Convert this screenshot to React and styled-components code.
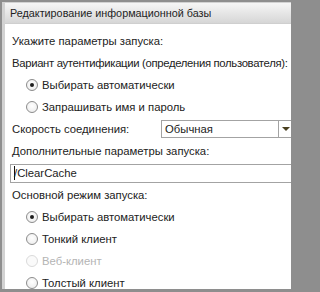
import React from "react";
import styled, { createGlobalStyle } from "styled-components";

const Global = createGlobalStyle`
  html, body { margin: 0; padding: 0; background: #8e8e8e; }
  body { font-family: "Liberation Sans", Arial, sans-serif; }
`;

const Window = styled.div`
  box-sizing: border-box;
  width: 294px;
  height: 292px;
  border-style: solid;
  border-color: #8e8e8e;
  border-width: 2px 3px 3px 2px;
  background: #d2d2d2;
  padding: 1px 0 0 3px;
  display: flex;
  flex-direction: column;
  overflow: hidden;
`;

const TitleBar = styled.div`
  height: 20px;
  flex: none;
  display: flex;
  align-items: center;
  padding-left: 5px;
  font-size: 10.8px;
  color: #1e1e1e;
  background: linear-gradient(#f6f6f6, #e6e6e6 50%, #d6d6d6);
  border-bottom: 1px solid #cfcfcf;
  white-space: nowrap;
`;

const Body = styled.div`
  flex: 1;
  background: #fff;
  padding: 6px 0 0 7px;
  display: flex;
  flex-direction: column;
  overflow: hidden;
`;

const Row = styled.div`
  height: 22px;
  flex: none;
  display: flex;
  align-items: center;
  font-size: 11.3px;
  letter-spacing: ${(p) => (p.$tight ? "-0.32px" : "normal")};
  color: ${(p) => (p.$disabled ? "#b4b4b4" : "#222")};
  white-space: nowrap;
  padding-left: ${(p) => (p.$indent ? "14px" : "0")};
`;

const Label = styled.span`
  width: 149px;
  flex: none;
`;

const Circle = styled.span`
  box-sizing: border-box;
  width: 12px;
  height: 12px;
  border-radius: 50%;
  border: 1px solid ${(p) => (p.$disabled ? "#dadada" : "#8c8c8c")};
  background: ${(p) =>
    p.$disabled ? "#fafafa" : "radial-gradient(circle at 50% 40%, #ffffff, #e9e9e9)"};
  display: inline-flex;
  align-items: center;
  justify-content: center;
  margin-right: 4px;
  flex: none;
  &::after {
    content: "";
    width: 4px;
    height: 4px;
    border-radius: 50%;
    background: #1e1e1e;
    display: ${(p) => (p.$checked ? "block" : "none")};
  }
`;

const Combo = styled.div`
  box-sizing: border-box;
  height: 18px;
  flex: 1;
  border: 1px solid #a3a3a3;
  border-right: none;
  display: flex;
  align-items: center;
`;

const ComboText = styled.span`
  flex: 1;
  padding-left: 3px;
  font-size: 11.3px;
  color: #222;
`;

const ComboButton = styled.span`
  width: 12px;
  align-self: stretch;
  border-left: 1px solid #a3a3a3;
  display: flex;
  align-items: center;
  justify-content: center;
`;

const Arrow = styled.span`
  width: 0;
  height: 0;
  border-left: 4px solid transparent;
  border-right: 4px solid transparent;
  border-top: 4px solid #4a4020;
  margin-left: 2px;
`;

const InputRow = styled.div`
  height: 22px;
  flex: none;
  display: flex;
  align-items: center;
  margin-left: -2px;
`;

const Input = styled.div`
  box-sizing: border-box;
  flex: 1;
  height: 19px;
  border: 1px solid #a3a3a3;
  border-right: none;
  display: flex;
  align-items: center;
  padding-left: 3px;
  font-size: 11.3px;
  color: #222;
`;

const Caret = styled.span`
  width: 1px;
  height: 14px;
  background: #111;
  margin-right: -1px;
`;

function Radio({ checked, disabled, children }) {
  return (
    <Row $indent $disabled={disabled}>
      <Circle $checked={checked} $disabled={disabled} />
      {children}
    </Row>
  );
}

export default function App() {
  return (
    <>
      <Global />
      <Window>
        <TitleBar>Редактирование информационной базы</TitleBar>
        <Body>
          <Row>Укажите параметры запуска:</Row>
          <Row $tight>Вариант аутентификации (определения пользователя):</Row>
          <Radio checked>Выбирать автоматически</Radio>
          <Radio>Запрашивать имя и пароль</Radio>
          <Row>
            <Label>Скорость соединения:</Label>
            <Combo>
              <ComboText>Обычная</ComboText>
              <ComboButton>
                <Arrow />
              </ComboButton>
            </Combo>
          </Row>
          <Row>Дополнительные параметры запуска:</Row>
          <InputRow>
            <Input>
              <Caret />
              /ClearCache
            </Input>
          </InputRow>
          <Row>Основной режим запуска:</Row>
          <Radio checked>Выбирать автоматически</Radio>
          <Radio>Тонкий клиент</Radio>
          <Radio disabled>Веб-клиент</Radio>
          <Radio>Толстый клиент</Radio>
        </Body>
      </Window>
    </>
  );
}
